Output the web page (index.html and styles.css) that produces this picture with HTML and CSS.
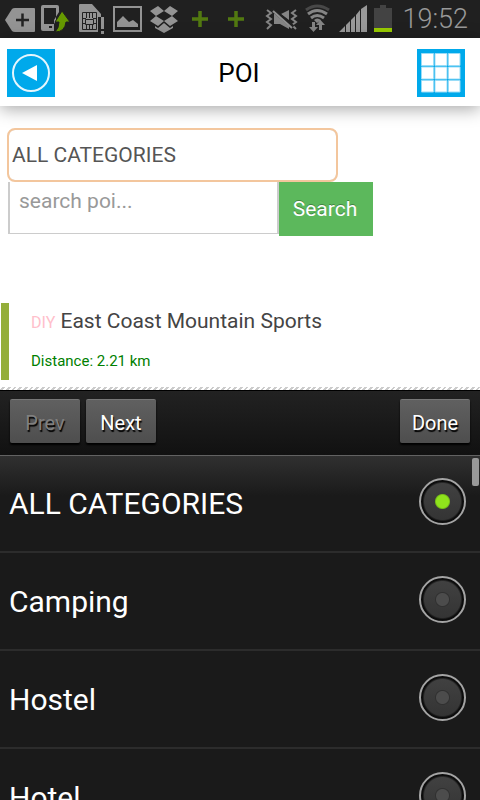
FILE: index.html
```html
<!DOCTYPE html>
<html lang="en">
<head>
<meta charset="utf-8">
<meta name="viewport" content="width=device-width, initial-scale=1">
<title>POI</title>
<link rel="stylesheet" href="styles.css">
</head>
<body>
<div class="status">
  <svg class="status-icons" width="250" height="38" viewBox="0 0 250 38" aria-hidden="true">
    <path fill="#949494" d="M5 20 12 9Q13 8 15 8H34Q35 8 35 9V31Q35 32 34 32H15Q13 32 12 31Z"/>
    <path stroke="#222" stroke-width="2.5" d="M16 20H29M22.500 13.500V26.500"/>
    <path fill="#949494" fill-rule="evenodd" d="M43 5H57Q59 5 59 7V12L54 20V31H43Q41 31 41 29V7Q41 5 43 5ZM44 8V24H54L56 20V8ZM49 26V28H52V26Z"/>
    <path fill="#669900" stroke="#202020" stroke-width="1" d="M62 11 70 22H66Q65 32 55 32Q59 28 59 22H55Z"/>
    <path fill="#949494" d="M80 4H92L101 14V17H98V32H80Q79 32 79 31V5Q79 4 80 4Z"/>
    <path fill="none" stroke="#222" stroke-width="1" d="M82.500 12.500H96.500V29.500H82.500ZM86.500 13V18M89.500 13V18M92.500 13V18M86.500 29V25M89.500 29V25M92.500 29V25M83 18.500H86M83 23.500H86M96 18.500H93M96 23.500H93M85.500 19.500H93.500V24.500H85.500Z"/>
    <path fill="#949494" d="M101 17H104V29H101ZM101 31H104V34H101Z"/>
    <path fill="none" stroke="#949494" stroke-width="2" d="M114 7H141V31H114Z"/>
    <path fill="#949494" d="M117 27V22L123 16 129 22 133 20 138 24V27Z"/>
    <path fill="#949494" d="M150 11 158 6 164 11 156 16ZM164 11 170 6 178 11 172 16ZM150 21 156 16 164 21 158 26ZM164 21 172 16 178 21 170 26ZM155 26 158 28 164 23 170 28 173 26V28L164 33 155 28Z"/>
    <path stroke="#527910" stroke-width="3.500" d="M192 19H208M200 11V27M228 19H244M236 11V27"/>
  </svg>
  <div class="status-right">
  <svg class="status-icons" width="130" height="38" viewBox="265 0 130 38" aria-hidden="true">
    <path fill="none" stroke="#858585" stroke-width="2" d="M268 10 272 13 268 16 272 19 268 22 272 25 268 29M297 10 293 13 297 16 293 19 297 22 293 25 297 29"/>
    <path fill="#858585" d="M275 14H280L290 22V29L281 24H275ZM282 14 290 10V20Z"/>
    <path stroke="#222" stroke-width="4" d="M273 9 294 27"/>
    <path stroke="#909090" stroke-width="2" d="M274 11 293 28"/>
    <path fill="none" stroke="#484848" stroke-width="3" d="M307 10Q318 2 330 10"/>
    <path fill="none" stroke="#858585" stroke-width="3" d="M309 14Q318 7 328 14M312 18Q318 13 325 18"/>
    <path fill="#858585" d="M315 20Q318 17 322 20L318 23ZM313 22H316V27H319L314.500 32 310 27H313ZM320 30V25H317L321.500 20 326 25H323V30Z"/>
    <path fill="#999" d="M340 32 346 26V32ZM347 25 351 21V32H347ZM352 20 356 16V32H352ZM357 15 361 10V32H357ZM362 9 368 5V32H362Z"/>
    <path fill="#434343" d="M375 8H381V5H387V8H393V28H375Z"/>
    <path fill="#99cc00" d="M375 28H393V32H375Z"/>
  </svg>
  <time class="clock">19:52</time>
  </div>
</div>

<header class="header">
  <button class="tile" type="button" aria-label="Back">
    <svg width="48" height="48" viewBox="0 0 48 48"><circle cx="24" cy="24" r="18" fill="none" stroke="#e5f6fd" stroke-width="2"/><path fill="#fff" d="M15 24 30 16V32Z"/></svg>
  </button>
  <h1 class="title">POI</h1>
  <button class="tile" type="button" aria-label="Grid menu">
    <svg width="48" height="48" viewBox="0 0 48 48"><path fill="#fff" stroke="#99dcf7" stroke-width="1" d="M4.500 4.500H16.500V16.500H4.500ZM18 4.500H30V16.500H18ZM31.500 4.500H43V16.500H31.500ZM4.500 18H16.500V30H4.500ZM18 18H30V30H18ZM31.500 18H43V30H31.500ZM4.500 31.500H16.500V43H4.500ZM18 31.500H30V43H18ZM31.500 31.500H43V43H31.500Z"/></svg>
  </button>
</header>

<main class="content">
  <form class="search">
    <select class="category" aria-label="Category">
      <option>ALL CATEGORIES</option>
      <option>Camping</option>
      <option>Hostel</option>
      <option>Hotel</option>
    </select>
    <div class="search-row">
      <input class="query" type="text" placeholder="search poi..." aria-label="Search poi">
      <button class="submit" type="button">Search</button>
    </div>
  </form>
  <article class="poi">
    <h2 class="poi-name"><span class="poi-tag">DIY</span> East Coast Mountain Sports</h2>
    <p class="distance">Distance: 2.21 km</p>
  </article>
</main>

<section class="picker" aria-label="Choose a category">
  <div class="picker-bar">
    <button class="picker-button" type="button" disabled>Prev</button>
    <button class="picker-button" type="button">Next</button>
    <button class="picker-button done" type="button">Done</button>
  </div>
  <div class="options">
    <label class="option">ALL CATEGORIES<input class="radio" type="radio" name="category" checked></label>
    <label class="option">Camping<input class="radio" type="radio" name="category"></label>
    <label class="option">Hostel<input class="radio" type="radio" name="category"></label>
    <label class="option">Hotel<input class="radio" type="radio" name="category"></label>
    <span class="scrollbar"></span>
  </div>
</section>
</body>
</html>
```
FILE: styles.css
```css
* {
  box-sizing: border-box;
}

body {
  margin: 0;
  height: 100vh;
  overflow: hidden;
  display: flex;
  flex-direction: column;
  background: #fff;
  color: #444;
  font-family: Roboto, sans-serif;
  font-size: 21px;
}

button,
input,
select {
  font: inherit;
  margin: 0;
}

.status {
  flex: none;
  display: flex;
  align-items: center;
  justify-content: space-between;
  padding-right: 12px;
  background: #202020;
}

.status-right {
  display: flex;
  gap: 8px;
}

.status-icons {
  display: block;
}

.clock {
  color: #999;
  font-size: 27px;
  font-weight: 300;
  line-height: 38px;
}

.header {
  flex: none;
  display: grid;
  grid-template-columns: 48px 1fr 48px;
  align-items: center;
  padding: 11px 15px 9px 7px;
  background: #fff;
  box-shadow: 0 3px 16px rgba(0, 0, 0, 0.35);
}

.tile {
  padding: 0;
  border: 0;
  background: #00a9eb;
}

.tile svg {
  display: block;
}

.title {
  margin: 0;
  padding-left: 6px;
  color: #000;
  font-size: 26px;
  font-weight: 400;
  line-height: 48px;
  text-align: center;
}

.content {
  flex: none;
  padding: 23px 0 7px;
}

.search {
  padding: 0 8px;
}

.category {
  appearance: none;
  display: block;
  width: 329px;
  height: 52px;
  padding: 0 3px;
  border: 1px solid #ccc;
  border-radius: 7px;
  outline: 2px solid #f3c69d;
  outline-offset: -1px;
  background: #fff;
  color: #555;
}

.search-row {
  display: flex;
  align-items: flex-start;
  margin-top: 1px;
}

.query {
  width: 271px;
  height: 52px;
  padding: 0 9px 14px;
  border: solid #ccc;
  border-width: 0 2px 1px 2px;
  border-radius: 0;
  background: #fff;
  color: #555;
}

.query::placeholder {
  color: #999;
  opacity: 1;
}

.submit {
  height: 54px;
  width: 94px;
  padding: 0 2px 0 0;
  border: 0;
  background: #5cb85c;
  color: #fff;
  text-shadow: 0 -1px 0 rgba(0, 0, 0, 0.3);
}

.poi {
  margin: 67px 0 0 1px;
  padding: 4px 0 8px 22px;
  border-left: 8px solid #94ae3a;
}

.poi-name {
  margin: 0 0 13px;
  font-size: 21px;
  font-weight: 400;
  line-height: 28px;
}

.poi-tag {
  color: #ffc0cb;
  font-size: 16px;
}

.distance {
  margin: 0;
  color: #008000;
  font-size: 15px;
  line-height: 22px;
}

.picker {
  flex: 1;
  min-height: 0;
  display: flex;
  flex-direction: column;
  background: #1a1a1a;
  color: #fff;
}

.picker::before {
  content: "";
  flex: none;
  height: 3px;
  background: repeating-linear-gradient(135deg, #fff 0 2px, #ccc 2px 4px);
}

.picker-bar {
  flex: none;
  display: flex;
  gap: 6px;
  padding: 8px 10px 12px;
  border-top: 1px solid #000;
  border-bottom: 1px solid #626262;
  background: linear-gradient(#222, #111);
}

.picker-button {
  width: 70px;
  height: 44px;
  padding: 2px 0 0;
  border: 0;
  border-top: 1px solid #777;
  border-radius: 2px;
  background: linear-gradient(#606060, #4e4e4e);
  box-shadow: 0 2px 2px #000;
  color: #fff;
  font-size: 20px;
  text-shadow: 1px 2px 1px #000;
}

.picker-button:disabled {
  color: #808080;
}

.done {
  margin-left: auto;
}

.options {
  position: relative;
  flex: 1;
  min-height: 0;
  overflow: hidden;
  background: linear-gradient(#303030, #1a1a1a 40px);
}

.option {
  display: flex;
  align-items: center;
  justify-content: space-between;
  height: 98px;
  padding: 0 14px 0 9px;
  border-bottom: 2px solid #2c2c2c;
  font-size: 30px;
}

.option:first-child {
  height: 97px;
}

.radio {
  appearance: none;
  width: 47px;
  height: 47px;
  margin-bottom: 4px;
  border: 2px solid #a4a4a4;
  border-radius: 50%;
  background:
    radial-gradient(circle, #4c4c4c 6px, #303030 7px, transparent 8px),
    radial-gradient(circle, transparent 18px, #0c0c0c 20px),
    linear-gradient(#424242, #333);
}

.radio:checked {
  background:
    radial-gradient(circle, #8fe31c 6px, #76bc18 7px, transparent 8px),
    radial-gradient(circle, transparent 18px, #0c0c0c 20px),
    linear-gradient(#424242, #333);
}

.scrollbar {
  position: absolute;
  top: 2px;
  right: 1px;
  width: 7px;
  height: 28px;
  border-radius: 2px;
  background: #999;
}
```
